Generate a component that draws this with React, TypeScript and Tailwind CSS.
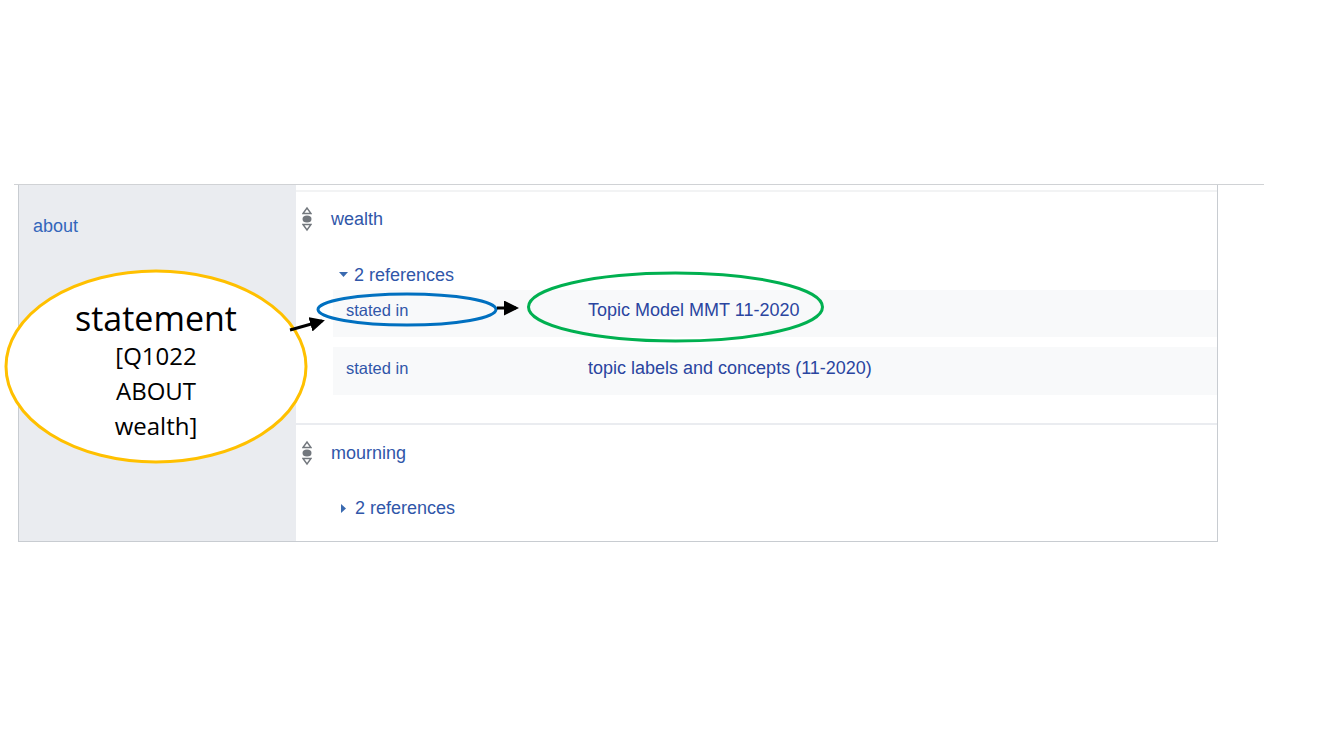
import React from "react"

function Ranker() {
  return (
    <svg width="10" height="26" viewBox="0 0 10 26" className="shrink-0">
      <path d="M1 7.5 L5 2 L9 7.5 Z" fill="none" stroke="#72777d" strokeWidth="1.4" />
      <ellipse cx="5" cy="13" rx="4.5" ry="3.5" fill="#72777d" />
      <path d="M1 18.5 L5 24 L9 18.5 Z" fill="none" stroke="#72777d" strokeWidth="1.4" />
    </svg>
  )
}

function Caret({ open }: { open: boolean }) {
  return open ? (
    <svg width="9" height="6" viewBox="0 0 9 6" className="mr-[6px]">
      <path d="M0 0 L9 0 L4.5 5 Z" fill="#3a6ab0" />
    </svg>
  ) : (
    <svg width="6" height="9" viewBox="0 0 6 9" className="mr-[8px] ml-[2px]">
      <path d="M0 0 L5 4.5 L0 9 Z" fill="#3a6ab0" />
    </svg>
  )
}

function RefRow({ prop, value, pt, h }: { prop: string; value: string; pt: string; h: string }) {
  return (
    <div className={`flex bg-[#f8f9fa] pl-[13px] ${pt} ${h}`}>
      <div className="w-[242px] text-[16.5px] leading-[20px] text-[#3056a9]">{prop}</div>
      <div className="text-[18px] leading-[20px] text-[#2a45a0]">{value}</div>
    </div>
  )
}

export default function App() {
  return (
    <div className="relative h-[748px] w-[1336px] overflow-hidden bg-white font-['Liberation_Sans',Arial,sans-serif]">
      <div className="pl-[14px] pt-[184px]">
        <div className="h-px w-[1250px] bg-[#d0d2d5]" />
        <div className="ml-[4px] flex w-[1200px] border-b border-l border-r border-[#c8ccd1]">
          {/* property label */}
          <div className="w-[277px] bg-[#eaecf0] pl-[14px] pt-[29px]">
            <span className="text-[18px] leading-[24px] text-[#3366bb]">about</span>
          </div>

          {/* statements */}
          <div className="flex-1">
            <div className="mt-[5px] h-[2px] bg-[#f2f3f4]" />

            {/* wealth */}
            <div className="pl-[6px] pt-[14px]">
              <div className="flex items-center">
                <Ranker />
                <span className="ml-[19px] text-[18px] leading-[24px] text-[#3056a9]">wealth</span>
              </div>
              <div className="mt-[31px] flex items-center pl-[37px] text-[18px] leading-[24px] text-[#3056a9]">
                <Caret open />
                <span>2 references</span>
              </div>
            </div>
            <div className="ml-[37px] mt-[3px] flex flex-col gap-[10px]">
              <RefRow prop="stated in" value="Topic Model MMT 11-2020" pt="pt-[10px]" h="h-[47px]" />
              <RefRow prop="stated in" value="topic labels and concepts (11-2020)" pt="pt-[11px]" h="h-[48px]" />
            </div>
            <div className="mt-[28px] h-[2px] bg-[#eaecf0]" />

            {/* mourning */}
            <div className="pb-[21px] pl-[6px] pt-[15px]">
              <div className="flex items-center">
                <Ranker />
                <span className="ml-[19px] text-[18px] leading-[24px] text-[#3056a9]">mourning</span>
              </div>
              <div className="mt-[30px] flex items-center pl-[37px] text-[18px] leading-[24px] text-[#3056a9]">
                <Caret open={false} />
                <span>2 references</span>
              </div>
            </div>
          </div>
        </div>
      </div>

      {/* annotation layer */}
      <svg className="pointer-events-none absolute left-0 top-0" width="1336" height="748">
        <defs>
          <marker id="head" markerWidth="5" markerHeight="5" refX="4" refY="2.5" orient="auto" markerUnits="strokeWidth">
            <path d="M0 0 L5 2.5 L0 5 Z" fill="#000" />
          </marker>
        </defs>
        <ellipse cx="156" cy="366.5" rx="150" ry="95.5" fill="#fff" stroke="#ffc000" strokeWidth="3" />
        <ellipse cx="407" cy="309.5" rx="89" ry="15.5" fill="none" stroke="#0070c0" strokeWidth="3" />
        <ellipse cx="675.5" cy="307" rx="147" ry="34" fill="none" stroke="#00b050" strokeWidth="3" />
        <line x1="290" y1="330" x2="322" y2="321" stroke="#000" strokeWidth="3" markerEnd="url(#head)" />
        <line x1="497" y1="308" x2="516" y2="308" stroke="#000" strokeWidth="3" markerEnd="url(#head)" />
      </svg>
      <div className="absolute left-[6px] top-[298px] w-[300px] text-center font-['Open_Sans',sans-serif] text-black">
        <div className="text-[34px] leading-[40px]">statement</div>
        <div className="text-[24px] leading-[35px]">[Q1022</div>
        <div className="text-[24px] leading-[35px]">ABOUT</div>
        <div className="text-[24px] leading-[35px]">wealth]</div>
      </div>
    </div>
  )
}
